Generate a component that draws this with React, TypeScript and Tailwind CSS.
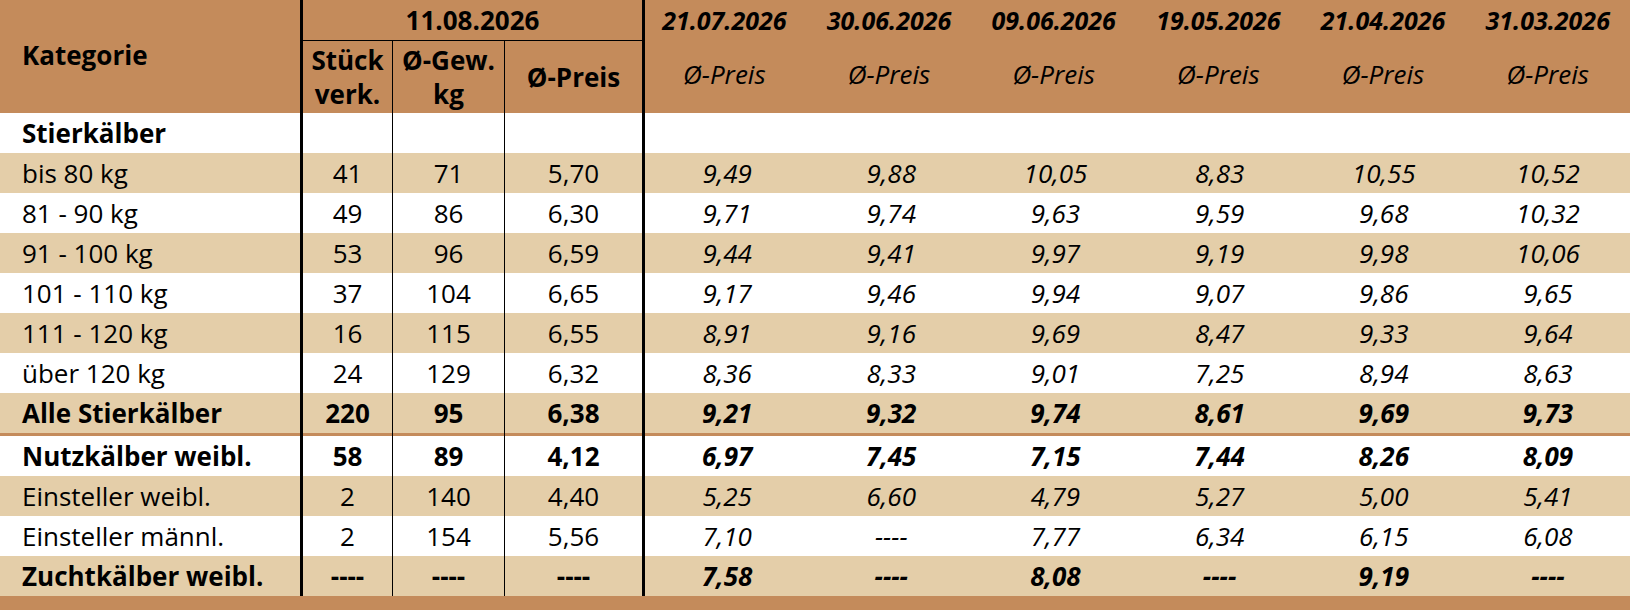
const dates = ['21.07.2026', '30.06.2026', '09.06.2026', '19.05.2026', '21.04.2026', '31.03.2026'];

type Row = {
  label: string;
  vals?: string[];
  hist?: string[];
  bold?: boolean;
  shade?: boolean;
};

const rows: Row[] = [
  { label: 'Stierkälber', bold: true },
  { label: 'bis 80 kg', vals: ['41', '71', '5,70'], hist: ['9,49', '9,88', '10,05', '8,83', '10,55', '10,52'], shade: true },
  { label: '81 - 90 kg', vals: ['49', '86', '6,30'], hist: ['9,71', '9,74', '9,63', '9,59', '9,68', '10,32'] },
  { label: '91 - 100 kg', vals: ['53', '96', '6,59'], hist: ['9,44', '9,41', '9,97', '9,19', '9,98', '10,06'], shade: true },
  { label: '101 - 110 kg', vals: ['37', '104', '6,65'], hist: ['9,17', '9,46', '9,94', '9,07', '9,86', '9,65'] },
  { label: '111 - 120 kg', vals: ['16', '115', '6,55'], hist: ['8,91', '9,16', '9,69', '8,47', '9,33', '9,64'], shade: true },
  { label: 'über 120 kg', vals: ['24', '129', '6,32'], hist: ['8,36', '8,33', '9,01', '7,25', '8,94', '8,63'] },
  { label: 'Alle Stierkälber', vals: ['220', '95', '6,38'], hist: ['9,21', '9,32', '9,74', '8,61', '9,69', '9,73'], bold: true, shade: true },
];

const rows2: Row[] = [
  { label: 'Nutzkälber weibl.', vals: ['58', '89', '4,12'], hist: ['6,97', '7,45', '7,15', '7,44', '8,26', '8,09'], bold: true },
  { label: 'Einsteller weibl.', vals: ['2', '140', '4,40'], hist: ['5,25', '6,60', '4,79', '5,27', '5,00', '5,41'], shade: true },
  { label: 'Einsteller männl.', vals: ['2', '154', '5,56'], hist: ['7,10', '----', '7,77', '6,34', '6,15', '6,08'] },
  { label: 'Zuchtkälber weibl.', vals: ['----', '----', '----'], hist: ['7,58', '----', '8,08', '----', '9,19', '----'], bold: true, shade: true },
];

function DataRow({ row }: { row: Row }) {
  const weight = row.bold ? 'font-bold' : 'font-normal';
  return (
    <div className={`flex h-[40px] text-[26px] ${row.shade ? 'bg-[#e4cea9]' : 'bg-white'}`}>
      <div className={`w-[300px] pl-[22px] flex items-center ${weight}`}>{row.label}</div>
      <div className={`w-[92px] border-l-[3px] border-black flex items-center justify-center ${weight}`}>{row.vals?.[0]}</div>
      <div className={`w-[112px] border-l border-black flex items-center justify-center ${weight}`}>{row.vals?.[1]}</div>
      <div className={`w-[138px] border-l border-black flex items-center justify-center ${weight}`}>{row.vals?.[2]}</div>
      <div className="flex flex-1 border-l-[3px] border-black">
        {dates.map((d, i) => (
          <div key={d} className={`flex-1 flex items-center justify-center italic ${weight}`}>
            {row.hist?.[i]}
          </div>
        ))}
      </div>
    </div>
  );
}

export default function App() {
  return (
    <div className="w-[1630px] h-[610px] bg-[#c48b5b] text-black" style={{ fontFamily: '"Open Sans", sans-serif' }}>
      {/* header */}
      <div className="flex h-[113px] bg-[#c48b5b] text-[26px] font-bold">
        <div className="w-[300px] pl-[22px] flex items-center pb-[3px]">Kategorie</div>
        <div className="w-[345px] border-x-[3px] border-black flex flex-col">
          <div className="h-[41px] border-b border-black flex items-center justify-center">11.08.2026</div>
          <div className="flex flex-1 leading-[34px]">
            <div className="w-[89px] flex flex-col items-center justify-center">
              <span>Stück</span>
              <span>verk.</span>
            </div>
            <div className="w-[112px] border-l border-black flex flex-col items-center justify-center">
              <span>Ø-Gew.</span>
              <span>kg</span>
            </div>
            <div className="flex-1 border-l border-black flex items-center justify-center">Ø-Preis</div>
          </div>
        </div>
        <div className="flex flex-1 -ml-[3px] text-[25px]">
          {dates.map(d => (
            <div key={d} className="flex-1 flex flex-col">
              <div className="h-[41px] flex items-center justify-center italic">{d}</div>
              <div className="flex-1 flex items-center justify-center italic font-normal text-[26px] pb-[6px]">Ø-Preis</div>
            </div>
          ))}
        </div>
      </div>

      {rows.map(r => (
        <DataRow key={r.label} row={r} />
      ))}
      <div className="flex h-[3px] bg-[#c48b5b]">
        <div className="w-[300px]" />
        <div className="w-[92px] border-l-[3px] border-black" />
        <div className="w-[112px] border-l border-black" />
        <div className="w-[138px] border-l border-black" />
        <div className="flex-1 border-l-[3px] border-black" />
      </div>
      {rows2.map(r => (
        <DataRow key={r.label} row={r} />
      ))}
    </div>
  );
}
